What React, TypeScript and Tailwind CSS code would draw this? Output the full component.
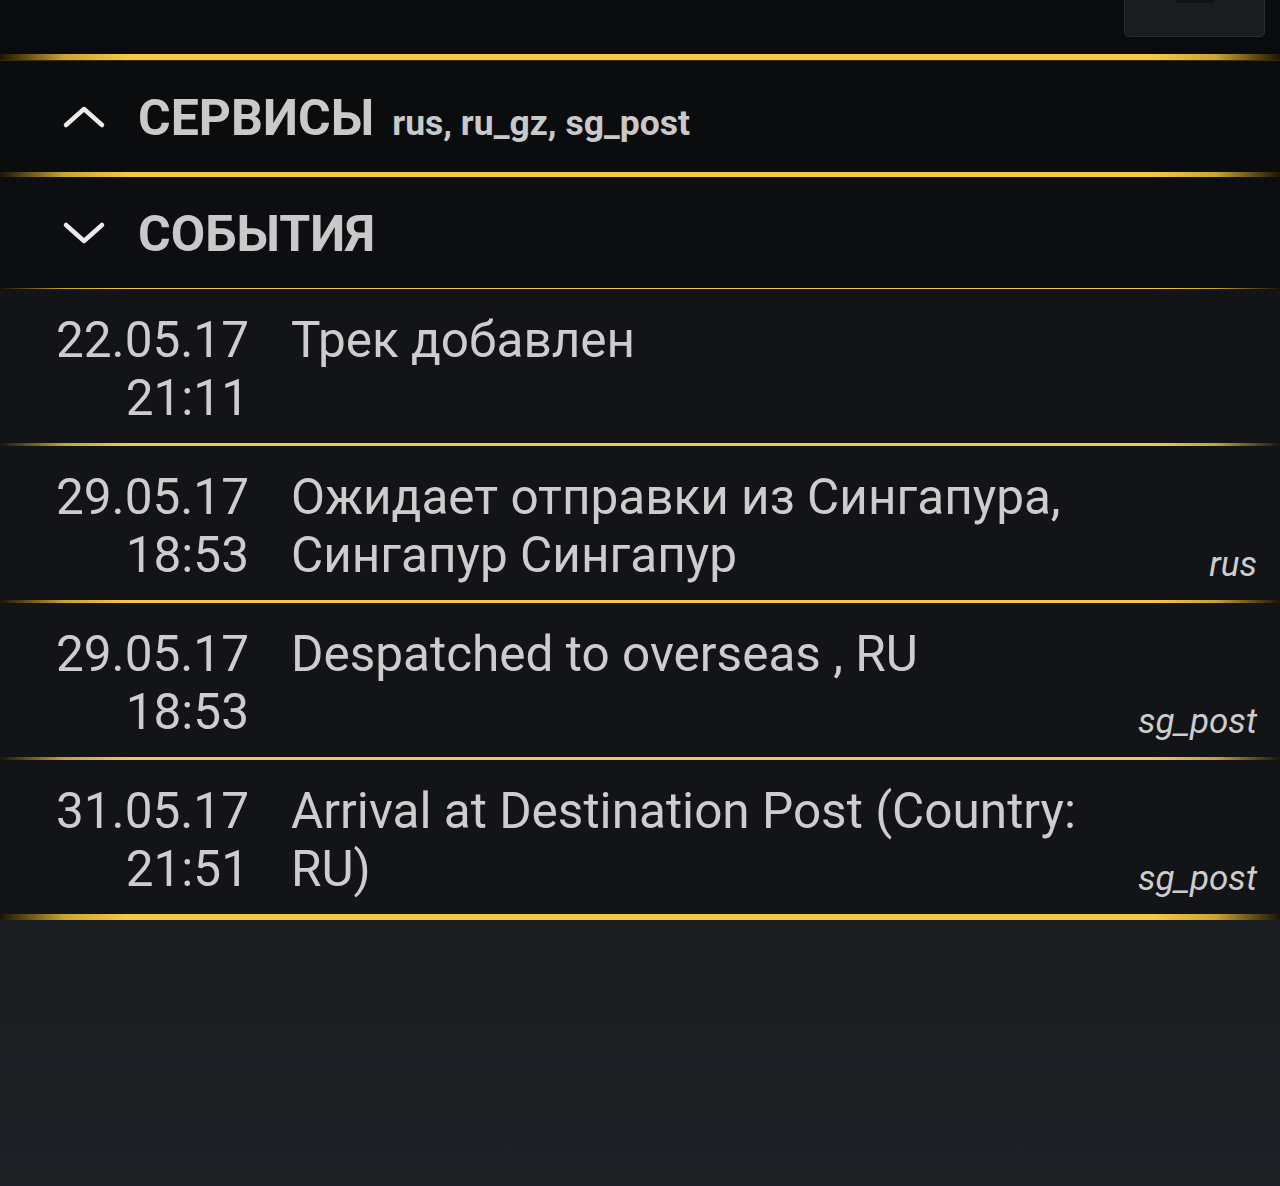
import React from "react";

const GOLD =
  "bg-[linear-gradient(90deg,#1a1505_0%,#c9a232_5%,#f6c945_10%,#f6c945_90%,#c9a232_95%,#1a1505_100%)]";

type Ev = { date: string; time: string; lines: string; tag?: string };

const events: Ev[] = [
  { date: "22.05.17", time: "21:11", lines: "Трек добавлен" },
  { date: "29.05.17", time: "18:53", lines: "Ожидает отправки из Сингапура, Сингапур Сингапур", tag: "rus" },
  { date: "29.05.17", time: "18:53", lines: "Despatched to overseas , RU", tag: "sg_post" },
  { date: "31.05.17", time: "21:51", lines: "Arrival at Destination Post (Country: RU)", tag: "sg_post" },
];

function Chevron({ up }: { up?: boolean }) {
  return (
    <svg width="44" height="24" viewBox="0 0 44 24" className="shrink-0">
      <polyline
        points={up ? "4,20 22,4 40,20" : "4,4 22,20 40,4"}
        fill="none"
        stroke="#ebebeb"
        strokeWidth="4.5"
        strokeLinecap="round"
        strokeLinejoin="round"
      />
    </svg>
  );
}

export default function App() {
  return (
    <div
      className="w-[1280px] h-[1186px] flex flex-col overflow-hidden bg-[#0a0b0d]"
      style={{ fontFamily: "Roboto, 'Noto Sans', sans-serif" }}
    >
      {/* top toolbar */}
      <div className="h-[54px] shrink-0 flex justify-end items-start pr-[15px] bg-[#0a0b0d]">
        <div className="w-[141px] h-[39px] mt-[-2px] rounded-b-[5px] border border-[#2c2d30] bg-[#1b1c1f] flex justify-center">
          <div className="w-[40px] h-[4px] rounded-b-full bg-[#111214]" />
        </div>
      </div>
      <div className={`h-[7px] shrink-0 ${GOLD} border-b border-[#3a2e08]`} />

      {/* services header */}
      <div className="h-[111px] shrink-0 flex items-center pl-[62px] bg-[#0b0c0e]">
        <Chevron up />
        <div className="ml-[32px] flex items-baseline mt-[2px]">
          <span className="text-[50px] leading-none font-bold text-[#c9c9c9]">СЕРВИСЫ</span>
          <span className="ml-[18px] text-[35.5px] leading-none font-bold text-[#c9c9c9]">rus, ru_gz, sg_post</span>
        </div>
      </div>
      <div className={`h-[5px] shrink-0 ${GOLD}`} />

      {/* events header */}
      <div className="h-[111px] shrink-0 flex items-center pl-[62px] bg-[#0d0e11]">
        <Chevron />
        <span className="ml-[32px] mt-[2px] text-[50px] leading-none font-bold text-[#c9c9c9]">СОБЫТИЯ</span>
      </div>
      <div className={`h-[1px] shrink-0 ${GOLD}`} />

      {/* events list */}
      {events.map((e, i) => (
        <React.Fragment key={i}>
          <div className="h-[154px] shrink-0 flex items-start pt-[22px] pb-[15px] bg-[#131418] text-[#cdcdcd]">
            <div className="w-[249px] shrink-0 text-right text-[49.5px] leading-[58px]">
              <div>{e.date}</div>
              <div>{e.time}</div>
            </div>
            <div className="ml-[42px] w-[820px] text-[49.5px] leading-[58px]">{e.lines}</div>
            <div className="flex-1 self-end text-right pr-[23px] text-[35px] leading-[40px] italic">
              {e.tag}
            </div>
          </div>
          <div className={`${i === events.length - 1 ? "h-[6px]" : "h-[3px]"} shrink-0 ${GOLD}`} />
        </React.Fragment>
      ))}

      <div className="flex-1 bg-[linear-gradient(180deg,#1a1c20_0%,#1d2024_100%)]" />
    </div>
  );
}
